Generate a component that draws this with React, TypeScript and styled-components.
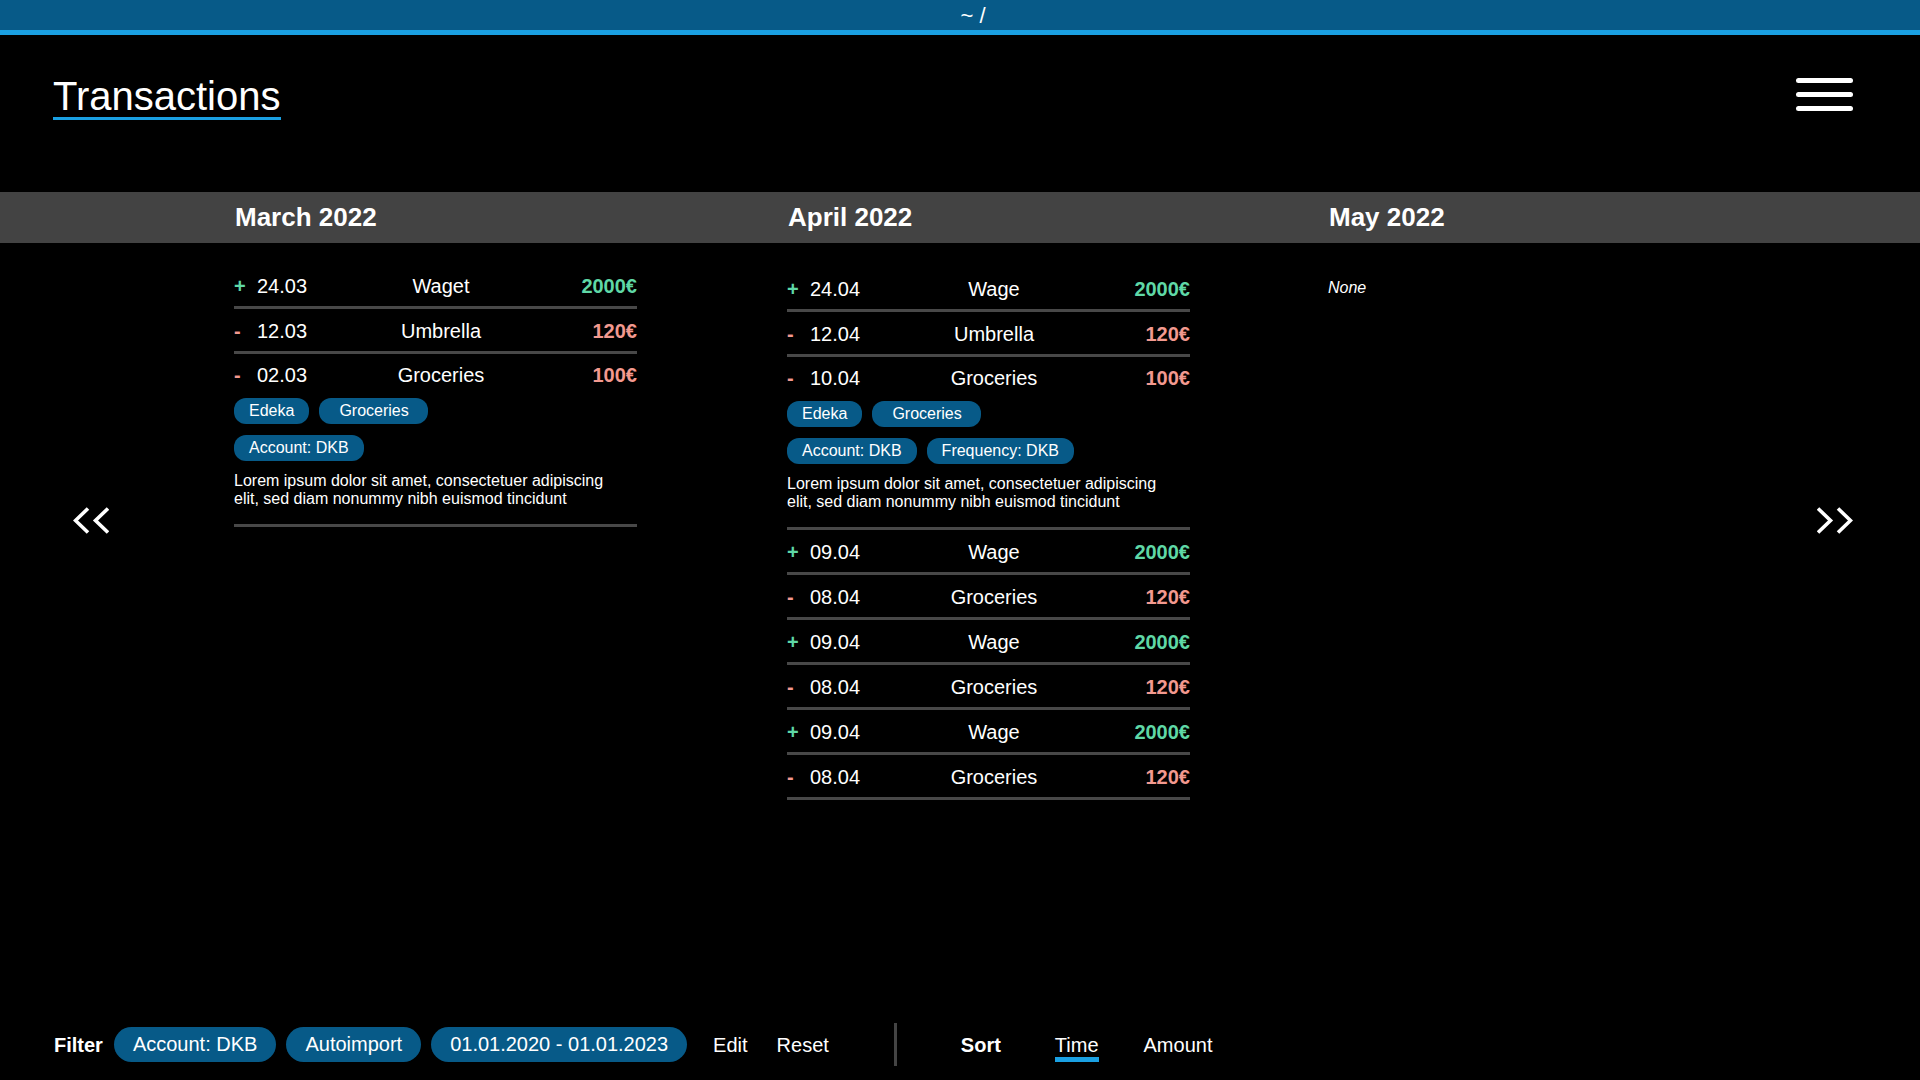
import React from "react";
import styled, { createGlobalStyle } from "styled-components";

const GlobalStyle = createGlobalStyle`
  html, body {
    margin: 0;
    padding: 0;
    background: #000;
  }
  body {
    font-family: "Liberation Sans", Arial, sans-serif;
    color: #fff;
  }
  * { box-sizing: border-box; }
`;

const GRID = "234px 553px 541px 1fr 120px";
const BLUE_DARK = "#075a88";
const BLUE_LIGHT = "#1aa0e2";
const GREEN = "#5fd8a6";
const PINK = "#f3998f";
const LINE = "#484848";

const Page = styled.div`
  height: 100vh;
  min-height: 1080px;
  display: flex;
  flex-direction: column;
  background: #000;
`;

const TopBar = styled.div`
  height: 35px;
  background: ${BLUE_DARK};
  border-bottom: 5px solid ${BLUE_LIGHT};
  text-align: center;
  font-size: 22px;
  line-height: 24px;
  padding: 4px 0 0 26px;
  color: #fff;
`;

const Header = styled.header`
  height: 157px;
  display: flex;
  justify-content: space-between;
  align-items: flex-start;
  padding: 42px 67px 0 53px;
`;

const Title = styled.h1`
  margin: 0;
  font-weight: 400;
  font-size: 40px;
  line-height: 39px;
  padding-bottom: 1px;
  border-bottom: 3px solid ${BLUE_LIGHT};
  display: inline-block;
`;

const MenuButton = styled.button`
  margin-top: 1px;
  width: 57px;
  display: flex;
  flex-direction: column;
  gap: 9px;
  padding: 0;
  border: none;
  background: transparent;
  cursor: pointer;
`;

const MenuBar = styled.span`
  display: block;
  height: 5px;
  width: 57px;
  border-radius: 3px;
  background: #fff;
`;

const MonthBand = styled.div`
  height: 51px;
  background: #434343;
  display: grid;
  grid-template-columns: ${GRID};
`;

const MonthLabel = styled.h2<{ $col: number }>`
  grid-column: ${(p) => p.$col};
  margin: 0;
  padding-left: 1px;
  font-size: 26px;
  font-weight: 700;
  line-height: 51px;
`;

const Body = styled.main`
  flex: 1;
  display: grid;
  grid-template-columns: ${GRID};
  align-items: start;
`;

const NavCell = styled.div<{ $side: "left" | "right" }>`
  padding-top: 264px;
  display: flex;
  justify-content: ${(p) => (p.$side === "left" ? "flex-start" : "flex-end")};
  padding-left: ${(p) => (p.$side === "left" ? "73px" : "0")};
  padding-right: ${(p) => (p.$side === "right" ? "67px" : "0")};
`;

const NavButton = styled.button`
  padding: 0;
  border: none;
  background: transparent;
  cursor: pointer;
  display: block;
  line-height: 0;
`;

const Column = styled.section<{ $offset: number }>`
  padding-top: ${(p) => p.$offset}px;
  width: 403px;
  display: flex;
  flex-direction: column;
`;

const Item = styled.div`
  border-bottom: 3px solid ${LINE};
  padding: 10px 0 8px;
`;

const ExpandedItem = styled.div`
  border-bottom: 3px solid ${LINE};
  padding: 9px 0 16px;
`;

const RowLine = styled.div`
  display: grid;
  grid-template-columns: 23px 84px 1fr 96px;
  align-items: baseline;
  font-size: 20px;
  line-height: 24px;
`;

const Sign = styled.span<{ $pos: boolean }>`
  font-weight: 700;
  color: ${(p) => (p.$pos ? GREEN : PINK)};
`;

const DateText = styled.span``;

const NameText = styled.span`
  text-align: center;
`;

const Amount = styled.span<{ $pos: boolean }>`
  text-align: right;
  font-weight: 700;
  color: ${(p) => (p.$pos ? GREEN : PINK)};
`;

const Details = styled.div`
  display: flex;
  flex-direction: column;
  gap: 11px;
  margin-top: 11px;
`;

const TagRow = styled.div`
  display: flex;
  gap: 10px;
`;

const Tag = styled.span<{ $wide?: boolean }>`
  height: 26px;
  line-height: 26px;
  padding: 0 ${(p) => (p.$wide ? "19px 0 20px" : "15px")};
  border-radius: 12px;
  background: ${BLUE_DARK};
  font-size: 16px;
  color: #fff;
`;

const Note = styled.p`
  margin: 0;
  font-size: 16px;
  line-height: 18px;
  max-width: 385px;
`;

const Empty = styled.p`
  margin: 0;
  font-style: italic;
  font-size: 16px;
  line-height: 20px;
`;

const Footer = styled.footer`
  height: 71px;
  display: flex;
  align-items: center;
  padding: 0 0 0 54px;
  font-size: 20px;
`;

const FooterLabel = styled.span<{ $gapRight: number }>`
  font-weight: 700;
  line-height: 24px;
  margin-right: ${(p) => p.$gapRight}px;
`;

const PillGroup = styled.div`
  display: flex;
  gap: 10px;
`;

const Pill = styled.span`
  height: 35px;
  line-height: 35px;
  padding: 0 19px;
  border-radius: 18px;
  background: ${BLUE_DARK};
`;

const TextAction = styled.span<{ $gapLeft: number }>`
  margin-left: ${(p) => p.$gapLeft}px;
  line-height: 24px;
`;

const Divider = styled.span`
  width: 3px;
  height: 43px;
  background: #444;
  margin: 0 64px 0 65px;
`;

const SortOption = styled.span<{ $active?: boolean; $gapLeft: number }>`
  margin-left: ${(p) => p.$gapLeft}px;
  line-height: 24px;
  padding-top: 5px;
  border-bottom: 5px solid ${(p) => (p.$active ? BLUE_LIGHT : "transparent")};
`;

type Tx = {
  pos: boolean;
  date: string;
  name: string;
  amount: string;
  tags?: string[][];
  note?: string;
};

type Month = { label: string; offset: number; items: Tx[] };

const LOREM =
  "Lorem ipsum dolor sit amet, consectetuer adipiscing elit, sed diam nonummy nibh euismod tincidunt";

const months: Month[] = [
  {
    label: "March 2022",
    offset: 21,
    items: [
      { pos: true, date: "24.03", name: "Waget", amount: "2000€" },
      { pos: false, date: "12.03", name: "Umbrella", amount: "120€" },
      {
        pos: false,
        date: "02.03",
        name: "Groceries",
        amount: "100€",
        tags: [["Edeka", "Groceries"], ["Account: DKB"]],
        note: LOREM,
      },
    ],
  },
  {
    label: "April 2022",
    offset: 24,
    items: [
      { pos: true, date: "24.04", name: "Wage", amount: "2000€" },
      { pos: false, date: "12.04", name: "Umbrella", amount: "120€" },
      {
        pos: false,
        date: "10.04",
        name: "Groceries",
        amount: "100€",
        tags: [
          ["Edeka", "Groceries"],
          ["Account: DKB", "Frequency: DKB"],
        ],
        note: LOREM,
      },
      { pos: true, date: "09.04", name: "Wage", amount: "2000€" },
      { pos: false, date: "08.04", name: "Groceries", amount: "120€" },
      { pos: true, date: "09.04", name: "Wage", amount: "2000€" },
      { pos: false, date: "08.04", name: "Groceries", amount: "120€" },
      { pos: true, date: "09.04", name: "Wage", amount: "2000€" },
      { pos: false, date: "08.04", name: "Groceries", amount: "120€" },
    ],
  },
  { label: "May 2022", offset: 35, items: [] },
];

const Chevrons: React.FC<{ dir: "left" | "right" }> = ({ dir }) => (
  <svg width="36" height="27" viewBox="0 0 36 27" fill="none">
    <g
      stroke="#fff"
      strokeWidth="3.6"
      strokeLinecap="butt"
      strokeLinejoin="miter"
      transform={dir === "right" ? "translate(36 0) scale(-1 1)" : undefined}
    >
      <polyline points="15,1.5 2.5,13.5 15,25.5" />
      <polyline points="35,1.5 22.5,13.5 35,25.5" />
    </g>
  </svg>
);

const Row: React.FC<{ tx: Tx }> = ({ tx }) => (
  <RowLine>
    <Sign $pos={tx.pos}>{tx.pos ? "+" : "-"}</Sign>
    <DateText>{tx.date}</DateText>
    <NameText>{tx.name}</NameText>
    <Amount $pos={tx.pos}>{tx.amount}</Amount>
  </RowLine>
);

const App: React.FC = () => (
  <>
    <GlobalStyle />
    <Page>
      <TopBar>~ /</TopBar>
      <Header>
        <Title>Transactions</Title>
        <MenuButton aria-label="Menu">
          <MenuBar />
          <MenuBar />
          <MenuBar />
        </MenuButton>
      </Header>
      <MonthBand>
        {months.map((m, i) => (
          <MonthLabel key={m.label} $col={i + 2}>
            {m.label}
          </MonthLabel>
        ))}
      </MonthBand>
      <Body>
        <NavCell $side="left">
          <NavButton aria-label="Previous">
            <Chevrons dir="left" />
          </NavButton>
        </NavCell>
        {months.map((m) => (
          <Column key={m.label} $offset={m.offset}>
            {m.items.length === 0 && <Empty>None</Empty>}
            {m.items.map((tx, i) =>
              tx.tags ? (
                <ExpandedItem key={i}>
                  <Row tx={tx} />
                  <Details>
                    {tx.tags.map((row, r) => (
                      <TagRow key={r}>
                        {row.map((t) => (
                          <Tag key={t} $wide={t === "Groceries"}>
                            {t}
                          </Tag>
                        ))}
                      </TagRow>
                    ))}
                    <Note>{tx.note}</Note>
                  </Details>
                </ExpandedItem>
              ) : (
                <Item key={i}>
                  <Row tx={tx} />
                </Item>
              )
            )}
          </Column>
        ))}
        <NavCell $side="right">
          <NavButton aria-label="Next">
            <Chevrons dir="right" />
          </NavButton>
        </NavCell>
      </Body>
      <Footer>
        <FooterLabel $gapRight={11}>Filter</FooterLabel>
        <PillGroup>
          <Pill>Account: DKB</Pill>
          <Pill>Autoimport</Pill>
          <Pill>01.01.2020 - 01.01.2023</Pill>
        </PillGroup>
        <TextAction $gapLeft={26}>Edit</TextAction>
        <TextAction $gapLeft={29}>Reset</TextAction>
        <Divider />
        <FooterLabel $gapRight={0}>Sort</FooterLabel>
        <SortOption $active $gapLeft={54}>
          Time
        </SortOption>
        <SortOption $gapLeft={45}>Amount</SortOption>
      </Footer>
    </Page>
  </>
);

export default App;
